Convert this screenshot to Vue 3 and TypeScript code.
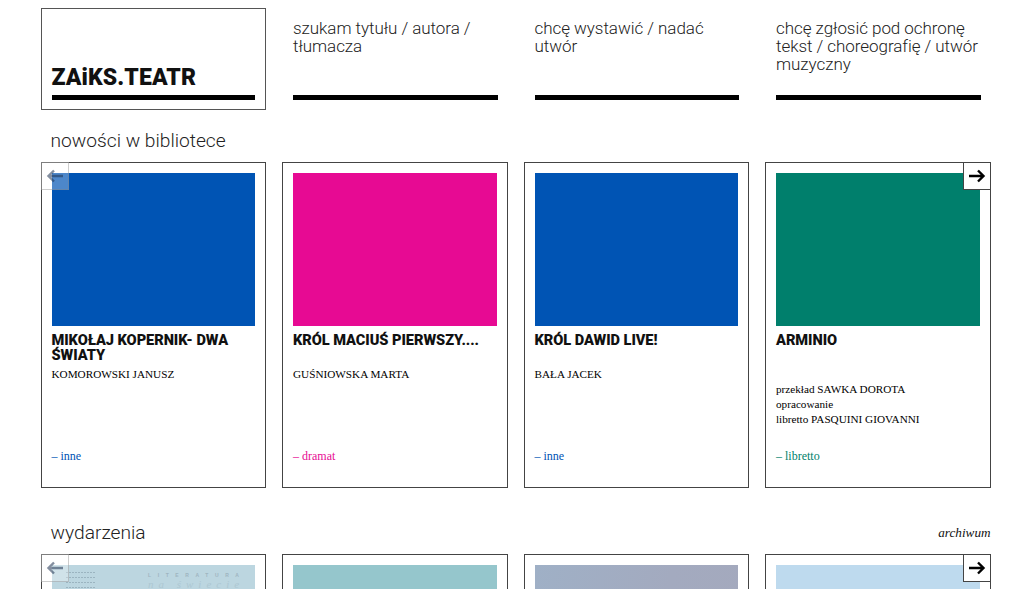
<script setup lang="ts">
interface Book { title: string; people: string[]; peopleGap?: boolean; tag: string; color: string }
const navItems: string[] = [
  'szukam tytułu / autora / tłumacza',
  'chcę wystawić / nadać utwór',
  'chcę zgłosić pod ochronę tekst / choreografię / utwór muzyczny',
]
const books: Book[] = [
  { title: 'MIKOŁAJ KOPERNIK- DWA ŚWIATY', people: ['KOMOROWSKI JANUSZ'], tag: 'inne', color: '#0054b4' },
  { title: 'KRÓL MACIUŚ PIERWSZY....', people: ['GUŚNIOWSKA MARTA'], tag: 'dramat', color: '#e70a93' },
  { title: 'KRÓL DAWID LIVE!', people: ['BAŁA JACEK'], tag: 'inne', color: '#0054b4' },
  { title: 'ARMINIO', people: ['przekład SAWKA DOROTA', 'opracowanie', 'libretto PASQUINI GIOVANNI'], peopleGap: true, tag: 'libretto', color: '#007f6c' },
]
const events: string[] = ['ev-a', 'ev-b', 'ev-c', 'ev-d']
</script>

<template>
  <div class="page">
    <header class="top">
      <div class="logo-box">
        <div class="logo">ZAiKS.TEATR</div>
        <div class="bar"></div>
      </div>
      <a v-for="item in navItems" :key="item" class="nav-item">
        <span class="nav-text">{{ item }}</span>
        <span class="bar"></span>
      </a>
    </header>

    <h2 class="heading first">nowości w bibliotece</h2>
    <section class="slider">
      <article v-for="b in books" :key="b.title" class="card">
        <div class="thumb" :style="{ background: b.color }"></div>
        <h3 class="title">{{ b.title }}</h3>
        <div class="people" :class="{ gap: b.peopleGap }">
          <div v-for="p in b.people" :key="p">{{ p }}</div>
        </div>
        <div class="tag" :style="{ color: b.color }">– {{ b.tag }}</div>
      </article>
      <button class="arrow prev" aria-label="poprzednie">
        <svg width="18" height="14" viewBox="0 0 18 14"><path d="M17 7H3M8 1.5 2.5 7 8 12.5" fill="none" stroke="currentColor" stroke-width="2.4"/></svg>
      </button>
      <button class="arrow next" aria-label="następne">
        <svg width="18" height="14" viewBox="0 0 18 14"><path d="M1 7h14M10 1.5 15.5 7 10 12.5" fill="none" stroke="currentColor" stroke-width="2.4"/></svg>
      </button>
    </section>

    <div class="heading-row">
      <h2 class="heading">wydarzenia</h2>
      <a class="archive">archiwum</a>
    </div>
    <section class="slider">
      <article v-for="e in events" :key="e" class="card">
        <div class="thumb" :class="e">
          <div v-if="e === 'ev-a'" class="poster">
            <div class="poster-lines"><i></i><i></i><i></i><i></i></div>
            <div class="poster-big">
              <span class="spaced">LITERATURA</span>
              <em>na świecie</em>
            </div>
          </div>
        </div>
      </article>
      <button class="arrow prev" aria-label="poprzednie">
        <svg width="18" height="14" viewBox="0 0 18 14"><path d="M17 7H3M8 1.5 2.5 7 8 12.5" fill="none" stroke="currentColor" stroke-width="2.4"/></svg>
      </button>
      <button class="arrow next" aria-label="następne">
        <svg width="18" height="14" viewBox="0 0 18 14"><path d="M1 7h14M10 1.5 15.5 7 10 12.5" fill="none" stroke="currentColor" stroke-width="2.4"/></svg>
      </button>
    </section>
  </div>
</template>

<style scoped>
.page {
  width: 950px;
  margin-left: 40.5px;
  padding-top: 8px;
  font-family: "Roboto", "Liberation Sans", sans-serif;
  color: #111;
}
.top {
  display: grid;
  grid-template-columns: repeat(4, 1fr);
  column-gap: 16px;
  height: 102px;
}
.logo-box {
  border: 1px solid #555;
  padding: 0 10px 9px;
  display: flex;
  flex-direction: column;
  justify-content: flex-end;
}
.logo {
  font-size: 23px;
  line-height: 26px;
  font-weight: 900;
  color: #111;
  letter-spacing: 0.1px;
  margin-bottom: 4px;
}
.bar {
  display: block;
  height: 5px;
  background: #000;
  flex: none;
}
.nav-item {
  padding: 11px 10px 10px 11px;
  display: flex;
  flex-direction: column;
  justify-content: space-between;
}
.nav-text {
  font-size: 17px;
  line-height: 18px;
  font-weight: 300;
  letter-spacing: -0.05px;
  color: #222;
}
.heading {
  margin: 0;
  font-size: 19.2px;
  line-height: 24px;
  font-weight: 300;
  color: #222;
}
.first {
  padding: 19px 0 9px 10px;
}
.heading-row {
  display: flex;
  justify-content: space-between;
  align-items: center;
  padding: 33px 0 9px 10px;
}
.archive {
  font-family: "Liberation Serif", serif;
  font-style: italic;
  font-size: 13.2px;
  color: #111;
}
.slider {
  position: relative;
  display: grid;
  grid-template-columns: repeat(4, 1fr);
  column-gap: 16px;
}
.card {
  border: 1px solid #444;
  padding: 10px 10px 0;
  height: 326px;
  box-sizing: border-box;
  display: flex;
  flex-direction: column;
  position: relative;
}
.thumb {
  height: 153px;
  flex: none;
  position: relative;
  overflow: hidden;
}
.title {
  margin: 7px 0 0;
  font-size: 14.6px;
  line-height: 15px;
  height: 30px;
  font-weight: 900;
  letter-spacing: -0.05px;
  color: #111;
}
.people {
  margin-top: 4px;
  font-family: "Liberation Serif", serif;
  font-size: 11.2px;
  line-height: 15px;
  color: #000;
}
.people.gap {
  margin-top: 19px;
}
.tag {
  position: absolute;
  left: 10px;
  top: 286px;
  font-family: "Liberation Serif", serif;
  font-size: 12px;
  line-height: 15px;
}
.arrow {
  position: absolute;
  top: 0;
  width: 28px;
  height: 28px;
  padding: 0;
  display: flex;
  align-items: center;
  justify-content: center;
  box-sizing: border-box;
}
.prev {
  left: 0;
  background: rgba(255, 255, 255, 0.3);
  border: 1px solid rgba(130, 130, 130, 0.4);
  color: rgba(30, 50, 80, 0.55);
}
.next {
  right: 0;
  background: #fff;
  border: 1px solid #444;
  color: #000;
}
.ev-a { background: #bcd6e0; }
.ev-b { background: #95c6cc; }
.ev-c { background: linear-gradient(100deg, #9fb0c6, #a3aabf 60%, #a4a9bd); }
.ev-d { background: #bedaee; }
.poster {
  display: flex;
  justify-content: space-between;
  padding: 7px 12px 0 14px;
}
.poster-lines {
  width: 30px;
  display: flex;
  flex-direction: column;
  gap: 4px;
}
.poster-lines i {
  display: block;
  height: 1px;
  background: repeating-linear-gradient(90deg, #9bb4c0 0 2px, transparent 2px 3px);
}
.poster-big {
  width: 95px;
  display: flex;
  flex-direction: column;
  color: #9fb5c1;
  font-family: "Liberation Serif", serif;
}
.spaced {
  font-family: "Liberation Sans", sans-serif;
  font-weight: 700;
  font-size: 5px;
  letter-spacing: 6.6px;
  line-height: 6px;
  white-space: nowrap;
}
.poster-big em {
  font-size: 11px;
  letter-spacing: 5px;
  line-height: 12px;
  white-space: nowrap;
  color: #adc7d2;
}
</style>

<style>
html, body { overflow: hidden; background: #fff; }
</style>
